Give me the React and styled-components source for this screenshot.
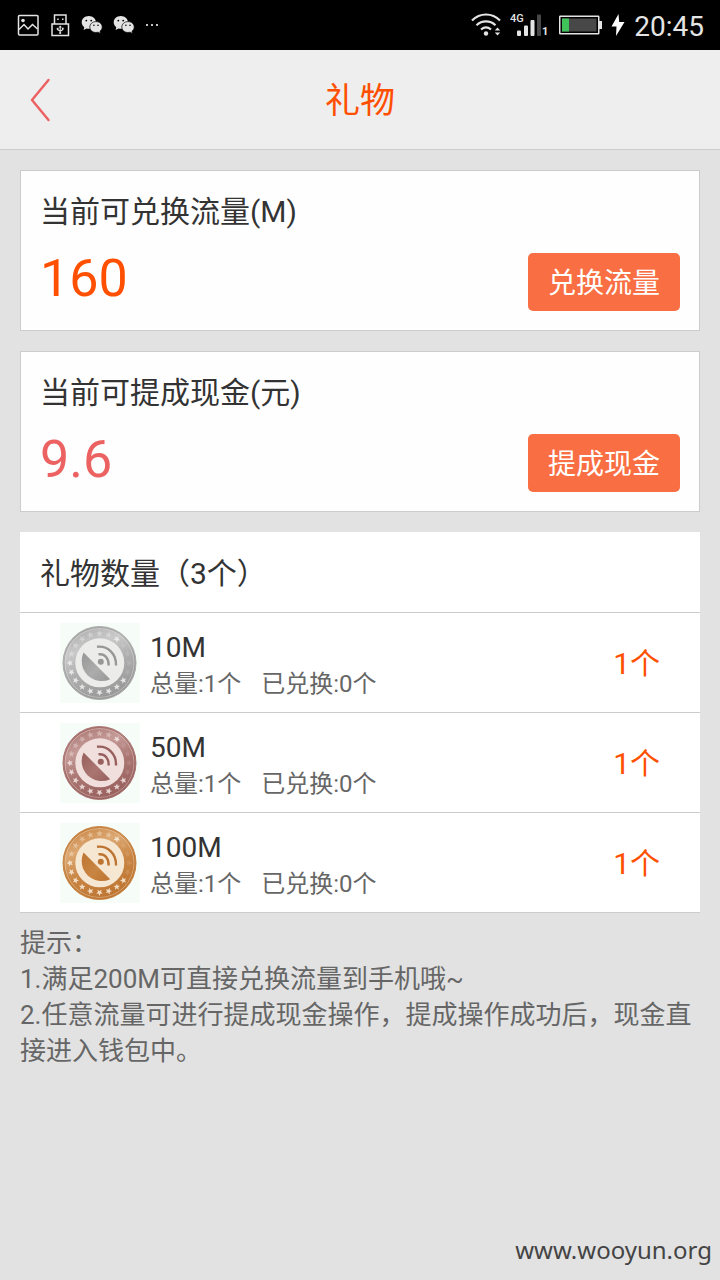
import React from "react";
import styled, { createGlobalStyle } from "styled-components";

const GlobalStyle = createGlobalStyle`
  *, *::before, *::after { box-sizing: border-box; }
  body {
    margin: 0;
    background: #e2e2e2;
    color: #333;
    font-family: Roboto, "Noto Sans CJK SC", sans-serif;
  }
  h1, h2, h3, p, ul, ol { margin: 0; padding: 0; font-weight: 400; }
  ul, ol { list-style: none; }
  svg { display: block; flex: none; }
`;

const Page = styled.div`
  display: flex;
  flex-direction: column;
  min-height: 100vh;
`;

const StatusBar = styled.div`
  display: flex;
  align-items: center;
  justify-content: space-between;
  height: 50px;
  padding: 0 16px;
  background: #000;
  color: #e4e4e4;
`;

const StatusGroup = styled.div`
  display: flex;
  align-items: center;
  gap: ${(p) => p.$gap}px;
`;

const Clock = styled.time`
  padding-top: 4px;
  font-size: 28px;
  line-height: 32px;
`;

const Header = styled.header`
  display: grid;
  grid-template-columns: 80px 1fr 80px;
  align-items: center;
  height: 100px;
  background: #eee;
  border-bottom: 1px solid #ccc;
`;

const BackButton = styled.button`
  display: flex;
  align-items: center;
  justify-content: center;
  height: 80px;
  padding: 0;
  border: 0;
  background: none;
  cursor: pointer;
`;

const Title = styled.h1`
  padding-top: 4px;
  color: #ff4f00;
  font-size: 35px;
  line-height: 48px;
  text-align: center;
`;

const Content = styled.main`
  display: flex;
  flex-direction: column;
  gap: 20px;
  padding: 20px 20px 0;
`;

const Card = styled.section`
  padding: 20px 19px 19px;
  background: #fefefe;
  border: 1px solid #ccc;
`;

const CardTitle = styled.h2`
  font-size: 30px;
  line-height: 42px;
`;

const BalanceRow = styled.div`
  display: flex;
  align-items: flex-end;
  justify-content: space-between;
  height: 78px;
`;

const Amount = styled.span`
  color: ${(p) => p.$color};
  font-size: 52px;
  line-height: 64px;
`;

const ActionButton = styled.button`
  height: 58px;
  padding: 4px 20px 0;
  border: 0;
  border-radius: 5px;
  background: #f96e42;
  color: #fff;
  font-family: inherit;
  font-size: 28px;
  line-height: 40px;
  cursor: pointer;
`;

const GiftPanel = styled.section`
  background: #fff;
  border-bottom: 1px solid #ccc;
`;

const GiftHeading = styled(CardTitle)`
  padding: 21px 20px 17px;
`;

const GiftRow = styled.li`
  display: flex;
  align-items: center;
  gap: 10px;
  height: 100px;
  padding: 0 40px;
  border-top: 1px solid #ccc;
`;

const GiftInfo = styled.div`
  flex: 1;
  padding-top: 6px;
`;

const GiftName = styled.h3`
  font-size: 28px;
  line-height: 36px;
`;

const GiftStats = styled.p`
  display: flex;
  gap: 20px;
  color: #666;
  font-size: 24px;
  line-height: 36px;
`;

const GiftCount = styled.span`
  padding-top: 2px;
  color: #ff4f00;
  font-size: 30px;
  line-height: 42px;
`;

const Tips = styled.section`
  padding: 12px 20px 0;
  color: #666;
  font-size: 26px;
  line-height: 36px;
`;

const Footer = styled.footer`
  margin-top: auto;
  padding: 20px 8px 13px;
  color: #444;
  font-family: "Noto Sans", sans-serif;
  font-size: 24px;
  line-height: 34px;
  text-align: right;
`;

const PictureIcon = () => (
  <svg width="24" height="24" viewBox="0 0 24 24" fill="none" stroke="#e4e4e4" strokeWidth="1.5" aria-hidden="true">
    <rect x="2.5" y="2.5" width="19.5" height="19.5" rx="1" />
    <path d="M3 16.5 8 11.5l4 4.5 4.5-4.5 5 4.5" />
    <circle cx="7" cy="7.5" r="1.8" fill="#e4e4e4" stroke="none" />
  </svg>
);

const UsbIcon = () => (
  <svg width="24" height="24" viewBox="0 0 24 24" fill="none" stroke="#e4e4e4" strokeWidth="1.5" aria-hidden="true">
    <path d="M6.5 11V2H18v9M4 11h16.5v11.5H4z" />
    <path d="M9.2 5.5h1.5V7H9.2zM14 5.5h1.5V7H14z" fill="#e4e4e4" stroke="none" />
    <path d="M12.2 13.5v6M9.7 15.5v1.2l2.5 1.6 2.5-1.6v-1.5" strokeWidth="1.1" />
    <path d="m12.2 12.4 1.7 2h-3.4z" fill="#e4e4e4" stroke="none" />
    <circle cx="12.2" cy="20" r="1.1" fill="#e4e4e4" stroke="none" />
    <circle cx="9.6" cy="15.7" r="1" fill="#e4e4e4" stroke="none" />
    <path d="M13.9 14.7h1.7v1.7h-1.7z" fill="#e4e4e4" stroke="none" />
  </svg>
);

const WechatIcon = () => (
  <svg width="24" height="24" viewBox="0 0 24 24" aria-hidden="true">
    <path
      d="M8.8 3C4.8 3 1.7 5.8 1.7 9.3c0 2 1 3.7 2.6 4.9l-.7 2.7 3-1.5c.8.2 1.6.3 2.4.3 4 0 7-2.8 7-6.3S12.8 3 8.8 3z"
      fill="#e4e4e4"
    />
    <path
      d="M16 8.6c-3.5 0-6.2 2.4-6.2 5.4s2.7 5.5 6.2 5.5c.7 0 1.5-.1 2.1-.3l2.5 1.3-.6-2.2c1.4-1 2.2-2.5 2.2-4.2 0-3.1-2.7-5.5-6.2-5.5z"
      fill="#e4e4e4"
      stroke="#000"
      strokeWidth="0.7"
    />
    <g fill="#000">
      <circle cx="6.3" cy="7.6" r="0.9" />
      <circle cx="11.2" cy="7.6" r="0.9" />
      <circle cx="13.9" cy="12.3" r="0.8" />
      <circle cx="18" cy="12.3" r="0.8" />
    </g>
  </svg>
);

const MoreIcon = () => (
  <svg width="16" height="24" viewBox="0 0 16 24" fill="#c4c4c4" aria-hidden="true">
    <path d="M2 11h2v2H2zM7 11h2v2H7zM12 11h2v2h-2z" />
  </svg>
);

const WifiIcon = () => (
  <svg width="30" height="24" viewBox="0 0 30 24" fill="none" stroke="#e4e4e4" strokeWidth="2.2" aria-hidden="true">
    <path d="M1 7.5C9-.5 21-.5 29 7.5M5.5 12.2c5.5-5 13.5-5 19 0M10 16.5c3-2.5 7-2.5 10 0" />
    <circle cx="15" cy="20.5" r="2.2" fill="#e4e4e4" stroke="none" />
    <path d="m26.5 14.5 2.7 3h-5.4zM26.5 22.5l2.7-3h-5.4z" fill="#e4e4e4" stroke="none" />
  </svg>
);

const SignalIcon = () => (
  <svg width="39" height="24" viewBox="0 0 39 24" fill="#e4e4e4" aria-hidden="true">
    <text x="0" y="9" fontFamily="Roboto, sans-serif" fontSize="11" fontWeight="500">4G</text>
    <rect x="7" y="17.5" width="4" height="5.5" rx="1" />
    <rect x="14" y="12.5" width="4" height="10.5" rx="1" />
    <rect x="20.5" y="7" width="4" height="16" rx="1" />
    <rect x="27" y="1.5" width="4" height="21.5" rx="1" fill="#484848" />
    <text x="32" y="22" fontFamily="Roboto, sans-serif" fontSize="11" fontWeight="700">1</text>
  </svg>
);

const BatteryIcon = () => (
  <svg width="44" height="24" viewBox="0 0 44 24" aria-hidden="true">
    <rect x="1.75" y="3.25" width="39" height="17.5" rx="0.5" fill="#000" stroke="#e4e4e4" strokeWidth="1.5" />
    <rect x="4" y="5.5" width="34.5" height="13" fill="#484848" />
    <rect x="4" y="5.5" width="7" height="13" fill="#41c35b" />
    <rect x="41" y="8" width="3" height="8" fill="#e4e4e4" />
  </svg>
);

const BoltIcon = () => (
  <svg width="14" height="24" viewBox="0 0 14 24" fill="#fff" aria-hidden="true">
    <path d="M7.5 1 .5 13.5h5L5 23l8.500-14H8.200z" />
  </svg>
);

const BackIcon = () => (
  <svg width="24" height="44" viewBox="0 0 24 44" fill="none" stroke="#ec6262" strokeWidth="2.5" strokeLinecap="round" strokeLinejoin="round" aria-hidden="true">
    <path d="M20.5 2 4 22l16.5 20" />
  </svg>
);

const STAR = "M0-3.4.9-1.1 3.3-1 1.5.5 2.1 2.8 0 1.5-2.1 2.8-1.5.5-3.3-1-.9-1.1z";
const STAR_COUNT = 20;

function starOpacity(angle) {
  if (angle > 315 || angle < 20) return 0.15;
  if (angle <= 180) return 0.9;
  return angle === 306 ? 0.95 : 0.45;
}

function Coin({ id, colors }) {
  const { light, mid, dark, face } = colors;
  const angles = Array.from({ length: STAR_COUNT }, (_, i) => (i * 360) / STAR_COUNT);
  return (
    <svg width="80" height="80" viewBox="0 0 80 80" aria-hidden="true">
      <defs>
        <linearGradient id={`${id}-ring`} x1="0.2" y1="0" x2="0.6" y2="1">
          <stop offset="0" stopColor={mid} />
          <stop offset="0.3" stopColor={light} />
          <stop offset="0.6" stopColor={mid} />
          <stop offset="1" stopColor={dark} />
        </linearGradient>
        <linearGradient id={`${id}-dish`} x1="0" y1="0" x2="1" y2="1">
          <stop offset="0" stopColor={dark} />
          <stop offset="0.55" stopColor={mid} />
          <stop offset="1" stopColor={dark} />
        </linearGradient>
      </defs>
      <rect width="80" height="80" fill="#f6fcf8" />
      <circle cx="39.5" cy="40" r="36.5" fill={`url(#${id}-ring)`} stroke={mid} strokeWidth="1" />
      <circle cx="39.5" cy="40" r="34.5" fill="none" stroke={face} strokeWidth="0.8" opacity="0.5" />
      <circle cx="39.5" cy="40" r="35.5" fill="none" stroke={dark} strokeWidth="1" opacity="0.6" />
      <circle cx="39.8" cy="39.8" r="24.5" fill={face} />
      <g fill={face}>
        {angles.map((a) => (
          <path
            key={a}
            d={STAR}
            opacity={starOpacity(a)}
            transform={`translate(39.5 40) rotate(${a}) translate(29.6 0) rotate(90)`}
          />
        ))}
      </g>
      <path d="M23.6 29.6 50.2 56.2A20 20 0 0 1 23.6 29.6z" fill={`url(#${id}-dish)`} />
      <circle cx="40.8" cy="38.8" r="3" fill={dark} />
      <g fill="none" stroke={dark} strokeWidth="2.4">
        <path d="M37 23.8C48 22.5 56.5 31 56 42.5" />
        <path d="M38.5 31.300C45 30.500 49 35.500 48.600 42.500" />
      </g>
    </svg>
  );
}

const COINS = {
  silver: { light: "#c9c9c9", mid: "#acacac", dark: "#979797", face: "#ececeb" },
  bronze: { light: "#c49a97", mid: "#aa7571", dark: "#975f5d", face: "#f0dfdc" },
  gold: { light: "#dca873", mid: "#c98543", dark: "#bd7431", face: "#f6e7d2" },
};

const BALANCES = [
  { title: "当前可兑换流量(M)", amount: "160", color: "#ff4f00", action: "兑换流量" },
  { title: "当前可提成现金(元)", amount: "9.6", color: "#ec6262", action: "提成现金" },
];

const GIFTS = [
  { name: "10M", coin: "silver", total: 1, used: 0, left: 1 },
  { name: "50M", coin: "bronze", total: 1, used: 0, left: 1 },
  { name: "100M", coin: "gold", total: 1, used: 0, left: 1 },
];

export default function App() {
  return (
    <>
      <GlobalStyle />
      <Page>
        <StatusBar>
          <StatusGroup $gap={8}>
            <PictureIcon />
            <UsbIcon />
            <WechatIcon />
            <WechatIcon />
            <MoreIcon />
          </StatusGroup>
          <StatusGroup $gap={9}>
            <WifiIcon />
            <SignalIcon />
            <BatteryIcon />
            <BoltIcon />
            <Clock>20:45</Clock>
          </StatusGroup>
        </StatusBar>

        <Header>
          <BackButton type="button" aria-label="返回">
            <BackIcon />
          </BackButton>
          <Title>礼物</Title>
        </Header>

        <Content>
          {BALANCES.map((b) => (
            <Card key={b.title}>
              <CardTitle>{b.title}</CardTitle>
              <BalanceRow>
                <Amount $color={b.color}>{b.amount}</Amount>
                <ActionButton type="button">{b.action}</ActionButton>
              </BalanceRow>
            </Card>
          ))}

          <GiftPanel>
            <GiftHeading>礼物数量（3个）</GiftHeading>
            <ul>
              {GIFTS.map((g) => (
                <GiftRow key={g.name}>
                  <Coin id={g.coin} colors={COINS[g.coin]} />
                  <GiftInfo>
                    <GiftName>{g.name}</GiftName>
                    <GiftStats>
                      <span>{`总量:${g.total}个`}</span>
                      <span>{`已兑换:${g.used}个`}</span>
                    </GiftStats>
                  </GiftInfo>
                  <GiftCount>{`${g.left}个`}</GiftCount>
                </GiftRow>
              ))}
            </ul>
          </GiftPanel>
        </Content>

        <Tips>
          <p>提示：</p>
          <p>1.满足200M可直接兑换流量到手机哦~</p>
          <p>2.任意流量可进行提成现金操作，提成操作成功后，现金直接进入钱包中。</p>
        </Tips>

        <Footer>www.wooyun.org</Footer>
      </Page>
    </>
  );
}
